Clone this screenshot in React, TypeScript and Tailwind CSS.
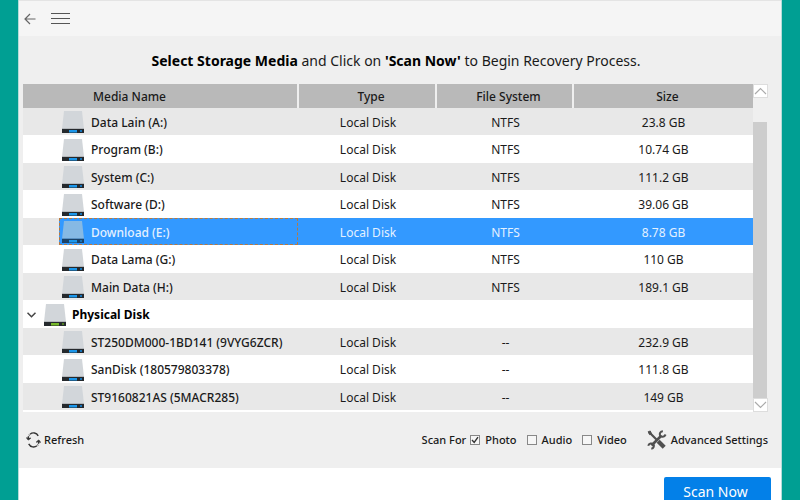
import React, { useState } from "react";

type Disk = {
  name: string;
  type?: string;
  fs?: string;
  size?: string;
  group?: boolean;
};

const disks: Disk[] = [
  { name: "Data Lain (A:)", type: "Local Disk", fs: "NTFS", size: "23.8 GB" },
  { name: "Program (B:)", type: "Local Disk", fs: "NTFS", size: "10.74 GB" },
  { name: "System (C:)", type: "Local Disk", fs: "NTFS", size: "111.2 GB" },
  { name: "Software (D:)", type: "Local Disk", fs: "NTFS", size: "39.06 GB" },
  { name: "Download (E:)", type: "Local Disk", fs: "NTFS", size: "8.78 GB" },
  { name: "Data Lama (G:)", type: "Local Disk", fs: "NTFS", size: "110 GB" },
  { name: "Main Data (H:)", type: "Local Disk", fs: "NTFS", size: "189.1 GB" },
  { name: "Physical Disk", group: true },
  { name: "ST250DM000-1BD141 (9VYG6ZCR)", type: "Local Disk", fs: "--", size: "232.9 GB" },
  { name: "SanDisk (180579803378)", type: "Local Disk", fs: "--", size: "111.8 GB" },
  { name: "ST9160821AS (5MACR285)", type: "Local Disk", fs: "--", size: "149 GB" },
];

function DriveIcon({ green, selected }: { green?: boolean; selected?: boolean }) {
  return (
    <svg width="22" height="23" viewBox="0 0 22 23" className="shrink-0">
      <path d="M2 0h18L22 18H0z" fill={selected ? "#86b9e4" : "#d2d6da"} />
      <path d="M0 17h22v1H0z" fill={selected ? "#5b92c4" : "#b4b8bc"} />
      <path d="M0 18h22v4H0z" fill={selected ? "#1b4268" : "#25292d"} />
      <path d="M7 19h8v2.500H7z" fill={green ? "#76b82a" : "#1c97ea"} />
      <path d="M18 19h2v2h-2z" fill={green ? "#4f7d22" : "#1673b8"} />
    </svg>
  );
}

function RefreshIcon() {
  return (
    <svg width="15" height="16" viewBox="0 0 15 16" fill="none" stroke="#333" strokeWidth="1.4">
      <path d="M4 2.2C6.600 0.200 10.500 0.400 12.200 3.900" />
      <path d="M2.200 6.500C2.200 4.900 2.700 3.700 3.500 2.800" strokeDasharray="2 1" />
      <path d="M0.300 5.600L2.300 8L4.900 5.900" fill="#333" strokeWidth="1" />
      <path d="M11 13.800C8.400 15.800 4.500 15.400 2.700 11.900" />
      <path d="M12.800 9.500C12.800 11.100 12.300 12.300 11.500 13.200" strokeDasharray="2 1" />
      <path d="M10.100 10.300L12.700 8L14.700 10.500" fill="#333" strokeWidth="1" />
    </svg>
  );
}

function ToolsIcon() {
  return (
    <svg width="20" height="20" viewBox="0 0 20 20" fill="none" stroke="#505050">
      <path d="M2.200 2.200L9.500 9.500" strokeWidth="2.200" />
      <path d="M1.200 1.700L3.300 1L4.500 3.800L2.500 4.600Z" fill="#505050" strokeWidth="1" />
      <path d="M11.200 11.200L17.200 17.200" strokeWidth="4.200" />
      <path d="M4.500 15.500L14.500 5.500" strokeWidth="2.600" />
      <path d="M15.900 1.200C13.200 1.200 12.200 3.600 13.100 5.500C14.200 7.400 17.400 7.300 18.600 4.500" strokeWidth="2" />
      <path d="M1.200 15.700C2 13.200 4.800 12.900 6.300 14.200C7.700 15.800 6.700 18.400 4.300 18.800" strokeWidth="2" />
    </svg>
  );
}

function Chevron({ up }: { up?: boolean }) {
  return (
    <svg width="13" height="8" viewBox="0 0 13 8" fill="none" stroke="#aaa" strokeWidth="1.2">
      <path d={up ? "M1 7L6.500 1.500L12 7" : "M1 1L6.500 6.500L12 1"} />
    </svg>
  );
}

export default function App() {
  const [selected, setSelected] = useState("Download (E:)");
  const [scanFor, setScanFor] = useState<Record<string, boolean>>({ Photo: true, Audio: false, Video: false });

  return (
    <div className="h-screen overflow-hidden bg-[#009f93] px-[18px] font-['Noto_Sans',sans-serif] text-xs text-[#1a1a1a]">
      <div className="flex h-full flex-col border-x border-[#b5dcd9] bg-white">
        <header className="flex h-9 shrink-0 items-center gap-[15px] border-t border-[#e4e4e4] bg-[#f5f5f5] px-[5px]">
          <button aria-label="Back">
            <svg width="12" height="12" viewBox="0 0 12 12" fill="none" stroke="#666" strokeWidth="1.2">
              <path d="M11.500 6H1M6 1L1 6L6 11" />
            </svg>
          </button>
          <button aria-label="Menu">
            <svg width="19" height="12" viewBox="0 0 19 12" fill="none" stroke="#555">
              <path d="M0 0.500H19M0 5.500H19M0 10.500H19" />
            </svg>
          </button>
        </header>

        <main className="shrink-0 bg-[#efefef] pl-1">
          <h1 className="flex h-12 items-center justify-center pt-0.5 pr-3 text-sm font-normal">
            <span>
              <b className="text-black">Select Storage Media</b> and Click on <b className="text-black">'Scan Now'</b> to Begin Recovery Process.
            </span>
          </h1>

          <div className="flex pr-[13px]">
            <div className="grow border-b-2 border-white">
              <table className="w-full table-fixed border-separate border-spacing-0">
                <thead>
                  <tr className="h-6 bg-[#b9b9b9]">
                    <th className="w-[276px] border-r-2 border-[#efefef] pt-0.5 pl-[70px] text-left font-medium">Media Name</th>
                    <th className="w-[138px] border-r-2 border-[#efefef] pt-0.5 pl-2 font-medium">Type</th>
                    <th className="w-[137px] border-r-2 border-[#efefef] pt-0.5 pl-2 font-medium">File System</th>
                    <th className="pt-0.5 pl-2 font-medium">Size</th>
                  </tr>
                </thead>
                <tbody>
                  {disks.map((disk) => {
                    if (disk.group) {
                      return (
                        <tr key={disk.name} className="h-7 bg-white">
                          <td colSpan={4} className="pt-0.5">
                            <div className="flex items-center pl-1 font-bold text-black">
                              <button aria-label="Collapse" className="mr-2">
                                <svg width="9" height="6" viewBox="0 0 9 6" fill="none" stroke="#444" strokeWidth="1.500">
                                  <path d="M0.500 0.800L4.500 4.800L8.500 0.800" />
                                </svg>
                              </button>
                              <DriveIcon green />
                              <span className="ml-1.5">{disk.name}</span>
                            </div>
                          </td>
                        </tr>
                      );
                    }
                    const active = disk.name === selected;
                    const cell = active ? "bg-[#3399ff] pt-0.5" : "pt-0.5";
                    return (
                      <tr
                        key={disk.name}
                        onClick={() => setSelected(disk.name)}
                        className={`text-center odd:h-[27px] odd:bg-[#e8e8e8] even:h-7 even:bg-white ${active ? "text-[#e4f1ff]" : ""}`}
                      >
                        <td className="pl-9">
                          <div className={active ? "bg-[#3399ff] pr-px" : ""}>
                            <div
                              className={`flex h-[27px] items-center gap-[7px] pt-0.5 pl-[2px] font-medium ${active ? "border border-dashed border-[#b8793f]" : "border border-transparent"}`}
                            >
                              <DriveIcon selected={active} />
                              <span>{disk.name}</span>
                            </div>
                          </div>
                        </td>
                        <td className={cell}>{disk.type}</td>
                        <td className={cell}>{disk.fs}</td>
                        <td className={cell}>{disk.size}</td>
                      </tr>
                    );
                  })}
                </tbody>
              </table>
            </div>
            <div className="flex w-[15px] shrink-0 flex-col">
              <button aria-label="Scroll up" className="flex h-[14px] items-center justify-center border border-[#ddd] bg-white">
                <Chevron up />
              </button>
              <div className="mt-6 mr-px grow bg-[#cdcdcd]" />
              <button aria-label="Scroll down" className="flex h-[14px] items-center justify-center border border-[#ddd] bg-white">
                <Chevron />
              </button>
            </div>
          </div>

          <div className="flex h-14 items-center pr-[13px] pl-[3px] text-[11px] font-medium">
            <button className="flex items-center gap-[3px]">
              <RefreshIcon />
              Refresh
            </button>
            <div className="ml-auto flex items-center">
              <span className="mr-1">Scan For</span>
              <div className="flex gap-[10px]">
                {Object.keys(scanFor).map((kind) => (
                  <label key={kind} className="flex items-center gap-[5px]">
                    <span className="grid">
                      <input
                        type="checkbox"
                        checked={scanFor[kind]}
                        onChange={() => setScanFor({ ...scanFor, [kind]: !scanFor[kind] })}
                        className="col-start-1 row-start-1 size-[10px] appearance-none border border-[#888] bg-[#f6f6f6]"
                      />
                      {scanFor[kind] && (
                        <svg width="10" height="10" viewBox="0 0 10 10" fill="none" stroke="#333" strokeWidth="1.400" className="pointer-events-none col-start-1 row-start-1">
                          <path d="M2 5L4.200 7.500L8 2.200" />
                        </svg>
                      )}
                    </span>
                    {kind}
                  </label>
                ))}
              </div>
            </div>
            <button className="ml-5 flex items-center gap-1">
              <ToolsIcon />
              Advanced Settings
            </button>
          </div>
        </main>

        <footer className="flex justify-end pt-[9px] pr-[10px]">
          <button className="h-[30px] w-[107px] shrink-0 rounded-t-xs bg-[#0380e8] pr-1 text-sm leading-4 text-white">Scan Now</button>
        </footer>
      </div>
    </div>
  );
}
